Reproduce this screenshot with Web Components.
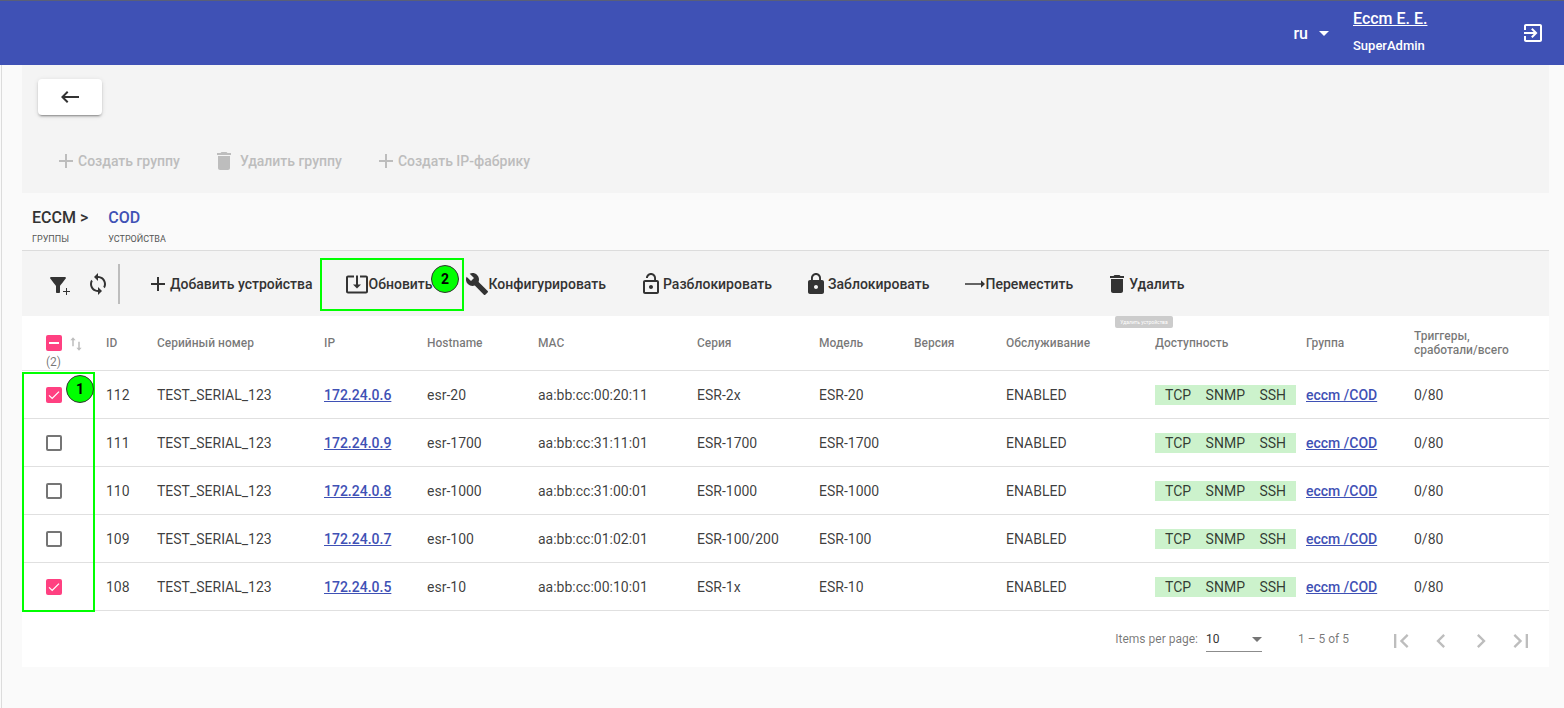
<!DOCTYPE html>
<html lang="ru">
<head>
<meta charset="utf-8">
<title>ECCM</title>
<style>
  html, body { margin: 0; padding: 0; height: 100%; }
  body { font-family: Roboto, "Liberation Sans", sans-serif; background: #fafafa; overflow: hidden; }
</style>
</head>
<body>
<eccm-page></eccm-page>

<script>
const ICONS = {
  back: "M21 11H6.83l3.58-3.59L9 6l-6 6 6 6 1.41-1.41L6.83 13H21z",
  add: "M19 13h-6v6h-2v-6H5v-2h6V5h2v6h6v2z",
  trash: "M6 19c0 1.1.9 2 2 2h8c1.1 0 2-.9 2-2V7H6v12zM19 4h-3.5l-1-1h-5l-1 1H5v2h14V4z",
  sync: "M12 4V1L8 5l4 4V6c3.31 0 6 2.69 6 6 0 1.01-.25 1.97-.7 2.8l1.46 1.46C19.54 15.03 20 13.57 20 12c0-4.42-3.58-8-8-8zm0 14c-3.31 0-6-2.69-6-6 0-1.01.25-1.97.7-2.8L5.24 7.74C4.46 8.97 4 10.43 4 12c0 4.42 3.58 8 8 8v3l4-4-4-4v3z",
  filter: "M1.25 6.61C3.27 9.2 7 14 7 14v6c0 .55.45 1 1 1h2c.55 0 1-.45 1-1v-6s3.72-4.8 5.74-7.39A.998.998 0 0 0 15.95 5H2.04c-.83 0-1.3.95-.79 1.61zM17 16h1v3h3v1h-3v3h-1v-3h-3v-1h3z",
  update: "M12 16.5l4-4h-3v-9h-2v9H8l4 4zm9-13h-6v1.99h6v14.03H3V5.49h6V3.5H3c-1.1 0-2 .9-2 2v14c0 1.1.9 2 2 2h18c1.1 0 2-.9 2-2v-14c0-1.1-.9-2-2-2z",
  wrench: "M22.7 19l-9.1-9.1c.9-2.3.4-5-1.5-6.9-2-2-5-2.4-7.4-1.3L9 6 6 9 1.6 4.7C.4 7.1.9 10.1 2.9 12.1c1.9 1.9 4.6 2.4 6.9 1.5l9.1 9.1c.4.4 1 .4 1.4 0l2.3-2.3c.5-.4.5-1.1.1-1.4z",
  unlock: "M12 17c1.1 0 2-.9 2-2s-.9-2-2-2-2 .9-2 2 .9 2 2 2zm6-9h-1V6c0-2.76-2.24-5-5-5S7 3.24 7 6h1.9c0-1.71 1.39-3.1 3.1-3.1 1.71 0 3.1 1.39 3.1 3.1v2H6c-1.1 0-2 .9-2 2v10c0 1.1.9 2 2 2h12c1.1 0 2-.9 2-2V10c0-1.1-.9-2-2-2zm0 12H6V10h12v10z",
  lock: "M18 8h-1V6c0-2.76-2.24-5-5-5S7 3.24 7 6v2H6c-1.1 0-2 .9-2 2v10c0 1.1.9 2 2 2h12c1.1 0 2-.9 2-2V10c0-1.1-.9-2-2-2zm-6 9c-1.1 0-2-.9-2-2s.9-2 2-2 2 .9 2 2-.9 2-2 2zm3.1-9H8.9V6c0-1.71 1.39-3.1 3.1-3.1 1.71 0 3.1 1.39 3.1 3.1v2z",
  move: "M19 11.25H3v1.5h16v3L23 12l-4-3.75z",
  exit: "M10.09 15.59L11.5 17l5-5-5-5-1.41 1.41L12.67 11H3v2h9.67l-2.58 2.59zM19 3H5c-1.11 0-2 .9-2 2v4h2V5h14v14H5v-4H3v4c0 1.1.89 2 2 2h14c1.1 0 2-.9 2-2V5c0-1.1-.9-2-2-2z",
  first: "M18.41 16.59L13.82 12l4.59-4.59L17 6l-6 6 6 6zM6 6h2v12H6z",
  prev: "M15.41 7.41L14 6l-6 6 6 6 1.41-1.41L10.83 12z",
  next: "M10 6L8.59 7.41 13.17 12l-4.58 4.59L10 18l6-6z",
  last: "M5.59 7.41L10.18 12l-4.59 4.59L7 18l6-6-6-6zM16 6h2v12h-2z",
  sort: "M8 3L4.5 7H7v8h2V7h2.5zM16 21l3.5-4H17V9h-2v8h-2.5z"
};

class EccmIcon extends HTMLElement {
  connectedCallback() {
    const size = this.getAttribute("size") || 24;
    this.attachShadow({ mode: "open" }).innerHTML = `
      <style>
        :host { display: inline-flex; width: ${size}px; height: ${size}px; flex: none; }
        svg { width: 100%; height: 100%; fill: currentColor; display: block; }
      </style>
      <svg viewBox="0 0 24 24"><path d="${ICONS[this.getAttribute("name")]}"/></svg>`;
  }
}

class EccmHeader extends HTMLElement {
  constructor() {
    super();
    this.attachShadow({ mode: "open" }).innerHTML = `
      <style>
        :host {
          display: flex; align-items: center; justify-content: flex-end;
          height: 64px; box-sizing: content-box;
          border-top: 1px solid #5a5f78;
          background: #3f51b5; color: #fff;
          padding-right: 19px;
        }
        .lang { display: flex; align-items: center; font-size: 16px; font-weight: 500; margin-right: 24px; }
        .lang i { width: 0; height: 0; margin-left: 11px; border: 5px solid transparent; border-top-color: #fff; border-bottom: 0; }
        .user { width: 168px; margin-top: -3px; }
        .name { display: block; font-size: 16px; font-weight: 500; color: #fff; line-height: 20px; margin-bottom: 9px; }
        .role { font-size: 13px; font-weight: 500; line-height: 16px; }
      </style>
      <div class="lang">ru<i></i></div>
      <div class="user">
        <a class="name" href="#">Eccm E. E.</a>
        <div class="role">SuperAdmin</div>
      </div>
      <eccm-icon name="exit"></eccm-icon>`;
  }
}

class EccmGroupBar extends HTMLElement {
  constructor() {
    super();
    this.attachShadow({ mode: "open" }).innerHTML = `
      <style>
        :host { display: block; height: 128px; box-sizing: border-box; background: #f4f4f4; padding: 14px 16px 0; }
        .back {
          display: flex; align-items: center; justify-content: center;
          width: 64px; height: 36px; background: #fff; color: #333; border-radius: 4px;
          box-shadow: 0 3px 1px -2px rgba(0,0,0,.2), 0 2px 2px rgba(0,0,0,.14), 0 1px 5px rgba(0,0,0,.12);
        }
        .actions { display: flex; margin-top: 28px; color: #bdbdbd; font-size: 14px; font-weight: 500; }
        .actions span { display: flex; align-items: center; height: 36px; padding: 0 16px; }
        .actions .wide { margin-right: 4px; }
      </style>
      <div class="back"><eccm-icon name="back"></eccm-icon></div>
      <div class="actions">
        <span><eccm-icon name="add"></eccm-icon>Создать группу</span>
        <span><eccm-icon class="wide" name="trash"></eccm-icon>Удалить группу</span>
        <span><eccm-icon name="add"></eccm-icon>Создать IP-фабрику</span>
      </div>`;
  }
}

class EccmCrumbs extends HTMLElement {
  constructor() {
    super();
    this.attachShadow({ mode: "open" }).innerHTML = `
      <style>
        :host {
          display: flex; gap: 20px; height: 58px; box-sizing: border-box;
          padding: 15px 0 0 10px; border-bottom: 1px solid #dcdcdc; color: #333;
        }
        b { display: block; font-size: 16px; font-weight: 500; line-height: 20px; }
        small { display: block; font-size: 9px; line-height: 12px; margin-top: 5px; text-transform: uppercase; color: #555; }
        .now b { color: #3f51b5; }
      </style>
      <div><b>ECCM &gt;</b><small>Группы</small></div>
      <div class="now"><b>COD</b><small>Устройства</small></div>`;
  }
}

class EccmToolButton extends HTMLElement {
  constructor() {
    super();
    this.attachShadow({ mode: "open" }).innerHTML = `
      <style>
        :host {
          display: flex; align-items: center; height: 36px; padding: 0 16px;
          font-size: 14px; font-weight: 500; color: #333; white-space: nowrap;
        }
      </style>
      <slot></slot>`;
  }
}

class EccmToolbar extends HTMLElement {
  constructor() {
    super();
    this.attachShadow({ mode: "open" }).innerHTML = `
      <style>
        :host {
          display: flex; align-items: center; height: 65px; box-sizing: border-box;
          background: #f4f4f4; color: #333; padding-left: 27px;
        }
        .rule { width: 2px; height: 40px; background: #bdbdbd; margin: 0 10px 0 8px; }
        .sync { margin-left: 13px; }
        .nudge { margin-left: 1px; }
        .tip {
          position: absolute; left: 1115px; top: 316px; width: 58px; height: 12px; border-radius: 2px;
          background: #ccc; color: #fff; font-size: 5px; line-height: 12px; text-align: center; white-space: nowrap;
        }
      </style>
      <eccm-icon name="filter"></eccm-icon>
      <eccm-icon class="sync" name="sync"></eccm-icon>
      <div class="rule"></div>
      <eccm-tool><eccm-icon name="add"></eccm-icon>Добавить устройства</eccm-tool>
      <eccm-tool><eccm-icon name="update"></eccm-icon>Обновить</eccm-tool>
      <eccm-tool><eccm-icon name="wrench"></eccm-icon>Конфигурировать</eccm-tool>
      <eccm-tool class="nudge"><eccm-icon name="unlock"></eccm-icon>Разблокировать</eccm-tool>
      <eccm-tool><eccm-icon name="lock"></eccm-icon>Заблокировать</eccm-tool>
      <eccm-tool><eccm-icon name="move"></eccm-icon>Переместить</eccm-tool>
      <eccm-tool><eccm-icon name="trash"></eccm-icon>Удалить</eccm-tool>
      <div class="tip">Удалить устройства</div>`;
  }
}

class EccmCheck extends HTMLElement {
  connectedCallback() {
    const state = this.getAttribute("state");
    const mark = state === "on"
      ? `<svg viewBox="0 0 16 16"><path d="M3 8.4l3.2 3L13 4.6" fill="none" stroke="#fff" stroke-width="1.3"/></svg>`
      : state === "mixed"
      ? `<svg viewBox="0 0 16 16"><path d="M3 8h10" fill="none" stroke="#fff" stroke-width="2"/></svg>`
      : "";
    this.attachShadow({ mode: "open" }).innerHTML = `
      <style>
        :host {
          display: block; width: 16px; height: 16px; box-sizing: border-box; border-radius: 2px;
          ${state ? "background: #ff4081;" : "border: 2px solid #757575;"}
        }
        svg { display: block; width: 16px; height: 16px; }
      </style>${mark}`;
  }
}

const GRID = "24px 60px 51px 167px 103px 111px 159px 122px 95px 92px 149px 151px 108px 1fr";

class EccmTableHead extends HTMLElement {
  constructor() {
    super();
    this.attachShadow({ mode: "open" }).innerHTML = `
      <style>
        :host {
          display: grid; grid-template-columns: ${GRID}; align-items: center;
          height: 55px; box-sizing: border-box; background: #fff;
          border-bottom: 1px solid #e0e0e0;
          font-size: 12px; font-weight: 500; color: rgba(0,0,0,.54); line-height: 14px;
        }
        .sel { grid-column: 2; position: relative; height: 100%; }
        .sel eccm-check { position: absolute; left: 0; top: 19px; }
        .sel eccm-icon { position: absolute; left: 21px; top: 19px; color: #bdbdbd; }
        .sel span { position: absolute; left: 0; top: 39px; font-weight: 400; line-height: 14px; }
      </style>
      <div class="sel"><eccm-check state="mixed"></eccm-check><eccm-icon name="sort" size="18"></eccm-icon><span>(2)</span></div>
      <div>ID</div><div>Серийный номер</div><div>IP</div><div>Hostname</div><div>MAC</div>
      <div>Серия</div><div>Модель</div><div>Версия</div><div>Обслуживание</div>
      <div>Доступность</div><div>Группа</div><div>Триггеры,<br>сработали/всего</div>`;
  }
}

class EccmRow extends HTMLElement {
  connectedCallback() {
    const d = this.dataset;
    this.attachShadow({ mode: "open" }).innerHTML = `
      <style>
        :host {
          display: grid; grid-template-columns: ${GRID}; align-items: center;
          height: 48px; box-sizing: border-box; background: #fff;
          border-bottom: 1px solid #e0e0e0;
          font-size: 14px; color: rgba(0,0,0,.77);
        }
        eccm-check { grid-column: 2; }
        a { color: #3f51b5; font-weight: 500; }
        .avail {
          display: flex; gap: 14.5px; width: 141px; height: 20px; box-sizing: border-box;
          padding-left: 10px; background: #ccf2cc; line-height: 20px;
        }
      </style>
      <eccm-check ${d.on ? 'state="on"' : ""}></eccm-check>
      <div>${d.id}</div><div>TEST_SERIAL_123</div>
      <div><a href="#">${d.ip}</a></div>
      <div>${d.host}</div><div>${d.mac}</div><div>${d.series}</div><div>${d.model}</div>
      <div></div><div>ENABLED</div>
      <div class="avail"><span>TCP</span><span>SNMP</span><span>SSH</span></div>
      <div><a href="#">eccm /COD</a></div><div>0/80</div>`;
  }
}

class EccmPaginator extends HTMLElement {
  constructor() {
    super();
    this.attachShadow({ mode: "open" }).innerHTML = `
      <style>
        :host {
          display: flex; align-items: flex-start; justify-content: flex-end;
          height: 56px; box-sizing: border-box; background: #fff;
          font-size: 12px; color: rgba(0,0,0,.54); padding: 0 14px 0 0;
        }
        .label { margin-top: 21px; line-height: 14px; }
        .select {
          position: relative; width: 56px; height: 26px; margin: 15px 0 0 8px; box-sizing: border-box;
          border-bottom: 1px solid #8c8c8c; color: #333; line-height: 26px;
        }
        .select i {
          position: absolute; right: 0; top: 11px; width: 0; height: 0;
          border: 5px solid transparent; border-top-color: #757575; border-bottom: 0;
        }
        .range { margin: 21px 38px 0 36px; line-height: 14px; }
        .nav { display: flex; gap: 12px; margin-top: 16px; color: #bdbdbd; }
      </style>
      <div class="label">Items per page:</div>
      <div class="select">10<i></i></div>
      <div class="range">1 – 5 of 5</div>
      <div class="nav">
        <eccm-icon name="first" size="28"></eccm-icon><eccm-icon name="prev" size="28"></eccm-icon>
        <eccm-icon name="next" size="28"></eccm-icon><eccm-icon name="last" size="28"></eccm-icon>
      </div>`;
  }
}

// green review marks that sit on top of the screen
class EccmMark extends HTMLElement {
  connectedCallback() {
    const [x, y, w, h] = this.getAttribute("box").split(" ");
    const [cx, cy] = this.getAttribute("dot").split(" ");
    this.attachShadow({ mode: "open" }).innerHTML = `
      <style>
        :host { position: absolute; left: 0; top: 0; }
        .box { position: absolute; left: ${x}px; top: ${y}px; width: ${w}px; height: ${h}px; box-sizing: border-box; border: 2px solid #0f0; }
        .dot {
          position: absolute; left: ${cx - 14}px; top: ${cy - 14}px; width: 28px; height: 28px;
          box-sizing: border-box; border: 1px solid #333; border-radius: 50%; background: #0f0;
          color: #000; font-size: 14px; font-weight: 700; line-height: 26px; text-align: center;
        }
      </style>
      <div class="box"></div><div class="dot"><slot></slot></div>`;
  }
}

class EccmPage extends HTMLElement {
  constructor() {
    super();
    this.attachShadow({ mode: "open" }).innerHTML = `
      <style>
        :host { display: block; position: relative; height: 708px; }
        main {
          margin-left: 1px; border-left: 1px solid #dcdcdc; height: 643px; box-sizing: border-box;
          padding: 0 15px 0 20px;
        }
      </style>
      <eccm-header></eccm-header>
      <main>
        <eccm-group-bar></eccm-group-bar>
        <eccm-crumbs></eccm-crumbs>
        <eccm-toolbar></eccm-toolbar>
        <eccm-table-head></eccm-table-head>
        <eccm-row data-id="112" data-ip="172.24.0.6" data-host="esr-20" data-mac="aa:bb:cc:00:20:11" data-series="ESR-2x" data-model="ESR-20" data-on="1"></eccm-row>
        <eccm-row data-id="111" data-ip="172.24.0.9" data-host="esr-1700" data-mac="aa:bb:cc:31:11:01" data-series="ESR-1700" data-model="ESR-1700"></eccm-row>
        <eccm-row data-id="110" data-ip="172.24.0.8" data-host="esr-1000" data-mac="aa:bb:cc:31:00:01" data-series="ESR-1000" data-model="ESR-1000"></eccm-row>
        <eccm-row data-id="109" data-ip="172.24.0.7" data-host="esr-100" data-mac="aa:bb:cc:01:02:01" data-series="ESR-100/200" data-model="ESR-100"></eccm-row>
        <eccm-row data-id="108" data-ip="172.24.0.5" data-host="esr-10" data-mac="aa:bb:cc:00:10:01" data-series="ESR-1x" data-model="ESR-10" data-on="1"></eccm-row>
        <eccm-paginator></eccm-paginator>
      </main>
      <eccm-mark box="22 372 73 240" dot="80 389">1</eccm-mark>
      <eccm-mark box="320 258 144 53" dot="445 279">2</eccm-mark>`;
  }
}

customElements.define("eccm-icon", EccmIcon);
customElements.define("eccm-header", EccmHeader);
customElements.define("eccm-group-bar", EccmGroupBar);
customElements.define("eccm-crumbs", EccmCrumbs);
customElements.define("eccm-tool", EccmToolButton);
customElements.define("eccm-toolbar", EccmToolbar);
customElements.define("eccm-check", EccmCheck);
customElements.define("eccm-table-head", EccmTableHead);
customElements.define("eccm-row", EccmRow);
customElements.define("eccm-paginator", EccmPaginator);
customElements.define("eccm-mark", EccmMark);
customElements.define("eccm-page", EccmPage);
</script>
</body>
</html>
